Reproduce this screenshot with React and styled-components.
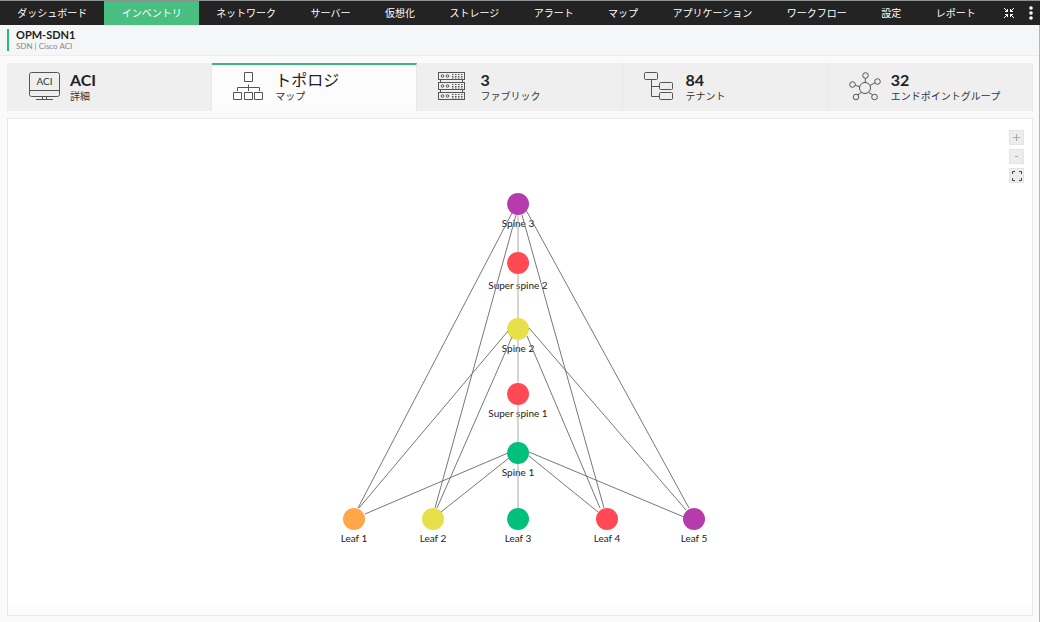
import React, { useState } from "react";
import styled, { createGlobalStyle } from "styled-components";

const GlobalStyle = createGlobalStyle`
  * {
    box-sizing: border-box;
  }

  body {
    margin: 0;
    background-color: #fafafa;
    color: #222;
    font-family: Lato, "Noto Sans CJK JP", sans-serif;
    font-size: 10px;
  }
`;

const Page = styled.div`
  display: flex;
  flex-direction: column;
  min-height: 100vh;
  border-right: 1px solid #b4b6b6;
`;

const NavBar = styled.nav`
  display: flex;
  height: 25px;
  margin-right: -1px;
  border-top: 1px solid #8d918f;
  background-color: #232323;
`;

const NavLink = styled.a`
  flex: 1 1 auto;
  display: flex;
  align-items: center;
  justify-content: center;
  padding: 0 17px;
  white-space: nowrap;
  text-decoration: none;
  line-height: 16px;
  color: #fff;
  background-color: ${props => props.$active ? '#48be81' : 'transparent'};
`;

const NavTools = styled.div`
  display: flex;
  align-items: center;
  gap: 13px;
  padding: 0 6px 0 10px;
`;

const ToolButton = styled.button`
  display: flex;
  padding: 0;
  border: 0;
  background: none;
  color: #fff;
  cursor: pointer;
`;

const Header = styled.header`
  padding: 4px 7px;
  border-bottom: 1px solid #eceded;
  background-color: #f4f6f7;
`;

const HeaderText = styled.div`
  padding-left: 7px;
  border-left: 2px solid #2fb673;

  h1 {
    margin: 0;
    font-size: 11px;
    line-height: 12px;
    font-weight: 700;
    color: #222;
  }

  p {
    margin: 0;
    font-size: 8px;
    line-height: 10px;
    color: #888;
  }
`;

const Content = styled.main`
  flex: 1;
  display: flex;
  flex-direction: column;
  gap: 7px;
  padding: 7px 6px 6px 7px;
`;

const Tabs = styled.div`
  display: grid;
  grid-template-columns: repeat(5, 1fr);
`;

const Tab = styled.button`
  display: flex;
  align-items: center;
  gap: 10px;
  height: 48px;
  padding: 0 0 2px 21px;
  border: 0;
  border-top: 2px solid ${props => props.$active ? '#3fb67c' : '#efefef'};
  border-right: 1px solid #e8e8e8;
  background-color: ${props => props.$active ? '#fcfcfc' : '#efefef'};
  color: #222;
  font-family: inherit;
  text-align: left;
  cursor: pointer;

  svg {
    flex: none;
  }
`;

const TabTitle = styled.span`
  display: block;
  font-size: 16px;
  line-height: 18px;
  font-weight: ${props => props.$light ? 400 : 700};
`;

const TabLabel = styled.span`
  display: block;
  font-size: 10px;
  line-height: 14px;
  white-space: nowrap;
  color: #333;
`;

const MapPanel = styled.section`
  flex: 1;
  position: relative;
  display: flex;
  justify-content: center;
  padding: 66px 0 40px;
  border: 1px solid #e9e9e9;
  background: linear-gradient(#fff calc(100% - 14px), #fafafa);
`;

const MapTools = styled.div`
  position: absolute;
  top: 11px;
  right: 8px;
  display: flex;
  flex-direction: column;
  gap: 4px;
`;

const MapButton = styled.button`
  display: flex;
  align-items: center;
  justify-content: center;
  width: 15px;
  height: 15px;
  padding: 0;
  border: 1px solid #e4e4e4;
  background-color: #ededed;
  color: ${props => props.$dark ? '#444' : '#aaa'};
  cursor: pointer;
`;

const NodeLabel = styled.text`
  font-family: Lato, sans-serif;
  font-size: 10px;
  fill: #222;
  text-anchor: middle;
`;

const navItems = [
    'ダッシュボード', 'インベントリ', 'ネットワーク', 'サーバー', '仮想化', 'ストレージ',
    'アラート', 'マップ', 'アプリケーション', 'ワークフロー', '設定', 'レポート'
];

const nodes = [
    { name: 'Spine 3', x: 196, y: 19, color: '#b63cae' },
    { name: 'Super spine 2', x: 196, y: 78, color: '#ff4a55', labelOffset: 26 },
    { name: 'Spine 2', x: 196, y: 144, color: '#e8df4a' },
    { name: 'Super spine 1', x: 196, y: 209, color: '#ff4a55' },
    { name: 'Spine 1', x: 196, y: 268, color: '#00c07c' },
    { name: 'Leaf 1', x: 32, y: 334, color: '#ffa646' },
    { name: 'Leaf 2', x: 111, y: 334, color: '#e8df4a' },
    { name: 'Leaf 3', x: 196, y: 334, color: '#00c07c' },
    { name: 'Leaf 4', x: 285, y: 334, color: '#ff4a55' },
    { name: 'Leaf 5', x: 372, y: 334, color: '#b63cae' }
];

// x1, y1, x2, y2
const links = [
    [190, 28, 36, 323],
    [194, 30, 113, 323],
    [200, 30, 282, 323],
    [204, 25, 367, 323],
    [186, 146, 37, 323],
    [190, 152, 115, 323],
    [205, 151, 278, 323],
    [207, 143, 364, 325],
    [186, 268, 43, 329],
    [187, 273, 119, 327],
    [207, 271, 276, 327],
    [207, 267, 362, 332]
];

const Icon = ({ children }) => (
    <svg width="32" height="32" viewBox="0 0 32 32" fill="none" stroke="#555" aria-hidden="true">
        {children}
    </svg>
);

const AciIcon = () => (
    <Icon>
        <rect x="1.5" y="1.5" width="30" height="24" rx="2" />
        <path d="M1.5 19.5H31.5M14.5 25.5V28M18.5 25.5V28M8 28.5H25" />
        <text x="16.5" y="14" fontSize="10" fontWeight="400" textAnchor="middle" fill="#333" stroke="none">ACI</text>
    </Icon>
);

const TopologyIcon = () => (
    <Icon>
        <path d="M11.5 1.5h8v9h-8zM15.5 13.5v3M4.5 20v-3.5h22v3.5M15.5 16.5v3.5" />
        <path d="M.5 21.5h8v7h-8zM11.5 21.5h8v7h-8zM21.5 21.5h8v7h-8z" />
    </Icon>
);

const FabricIcon = () => (
    <Icon>
        {[1, 11, 21].map((y) => (
            <g key={y}>
                <rect x=".5" y={y + 0.5} width="26" height="7" />
                <circle cx="4.5" cy={y + 4} r="1.3" />
                <circle cx="9.5" cy={y + 4} r="1.3" />
                <path d={`M14 ${y + 2.5}h11M14 ${y + 4.5}h11M14 ${y + 6}h11`} strokeDasharray="1.5 1.5" />
            </g>
        ))}
        <path d="M2.5 8.5v3M24.5 8.5v3M2.5 18.5v3M24.5 18.5v3" />
    </Icon>
);

const TenantIcon = () => (
    <Icon>
        <rect x=".5" y="1.5" width="13" height="7" rx="1" />
        <rect x="15.5" y="11.5" width="13" height="7" rx="1" />
        <rect x="15.5" y="21.5" width="13" height="7" rx="1" />
        <path d="M7.5 8.5V25.5H15.5M7.5 15.5H15.5" />
    </Icon>
);

const EndpointIcon = () => (
    <Icon>
        <circle cx="16" cy="17" r="5.5" />
        <circle cx="16.5" cy="4.5" r="2.8" />
        <circle cx="28.5" cy="10.5" r="2.8" />
        <circle cx="3.5" cy="13.5" r="2.8" />
        <circle cx="7" cy="26" r="2.8" />
        <circle cx="25.5" cy="26" r="2.8" />
        <path d="M16.3 7.5v4M21 14.5l5-2.8M6.3 14.3l4.4 1.4M12.5 21.3l-3.6 2.6M19.5 21.3l4 2.6" />
    </Icon>
);

const tabs = [
    { id: 'aci', title: 'ACI', label: '詳細', icon: <AciIcon /> },
    { id: 'map', title: 'トポロジ', label: 'マップ', icon: <TopologyIcon />, light: true },
    { id: 'fabric', title: '3', label: 'ファブリック', icon: <FabricIcon /> },
    { id: 'tenant', title: '84', label: 'テナント', icon: <TenantIcon /> },
    { id: 'epg', title: '32', label: 'エンドポイントグループ', icon: <EndpointIcon /> }
];

function TopologyMap() {
    return (
        <svg width="397" height="370" viewBox="0 0 397 370" role="img" aria-label="SDN">
            {nodes.map((n) => (
                <g key={n.name}>
                    <circle cx={n.x} cy={n.y} r="11" fill={n.color} />
                    <NodeLabel x={n.x} y={n.y + (n.labelOffset || 23)}>{n.name}</NodeLabel>
                </g>
            ))}
            <path d="M196 30V67M196 89V133M196 155V198M196 220V257M196 279V323" stroke="#aaa" />
            {links.map(([x1, y1, x2, y2]) => (
                <line key={`${x1}-${x2}`} x1={x1} y1={y1} x2={x2} y2={y2} stroke="#777" />
            ))}
        </svg>
    );
}

export default function App() {
    const [activeTab, setActiveTab] = useState('map');

    return (
        <Page>
            <GlobalStyle />
            <NavBar>
                {navItems.map((item) => (
                    <NavLink key={item} href="#" $active={item === 'インベントリ'}>{item}</NavLink>
                ))}
                <NavTools>
                    <ToolButton aria-label="Collapse">
                        <svg width="12" height="12" viewBox="0 0 12 12" fill="none" stroke="currentColor">
                            <path d="M1 1l3.5 3.5M11 1L7.5 4.5M1 11l3.5-3.5M11 11L7.5 7.5" />
                            <path d="M4.5 2v2.5H2M7.5 2v2.5H10M4.5 10V7.5H2M7.5 10V7.5H10" />
                        </svg>
                    </ToolButton>
                    <ToolButton aria-label="More">
                        <svg width="6" height="14" viewBox="0 0 6 14" fill="currentColor">
                            <circle cx="3" cy="2" r="1.8" />
                            <circle cx="3" cy="7" r="1.8" />
                            <circle cx="3" cy="12" r="1.8" />
                        </svg>
                    </ToolButton>
                </NavTools>
            </NavBar>
            <Header>
                <HeaderText>
                    <h1>OPM-SDN1</h1>
                    <p>SDN | Cisco ACI</p>
                </HeaderText>
            </Header>
            <Content>
                <Tabs>
                    {tabs.map((t) => (
                        <Tab key={t.id} $active={t.id === activeTab} onClick={() => setActiveTab(t.id)}>
                            {t.icon}
                            <span>
                                <TabTitle $light={t.light}>{t.title}</TabTitle>
                                <TabLabel>{t.label}</TabLabel>
                            </span>
                        </Tab>
                    ))}
                </Tabs>
                <MapPanel>
                    <TopologyMap />
                    <MapTools>
                        <MapButton aria-label="Zoom in">
                            <svg width="7" height="7" viewBox="0 0 7 7" stroke="currentColor"><path d="M3.5 0v7M0 3.5h7" /></svg>
                        </MapButton>
                        <MapButton aria-label="Zoom out">
                            <svg width="7" height="7" viewBox="0 0 7 7" stroke="currentColor"><path d="M2 3.5h3" /></svg>
                        </MapButton>
                        <MapButton aria-label="Full screen" $dark>
                            <svg width="10" height="10" viewBox="0 0 10 10" fill="none" stroke="currentColor">
                                <path d="M.5 3V.5H3M7 .5h2.5V3M9.5 7v2.5H7M3 9.5H.5V7" />
                            </svg>
                        </MapButton>
                    </MapTools>
                </MapPanel>
            </Content>
        </Page>
    );
}
